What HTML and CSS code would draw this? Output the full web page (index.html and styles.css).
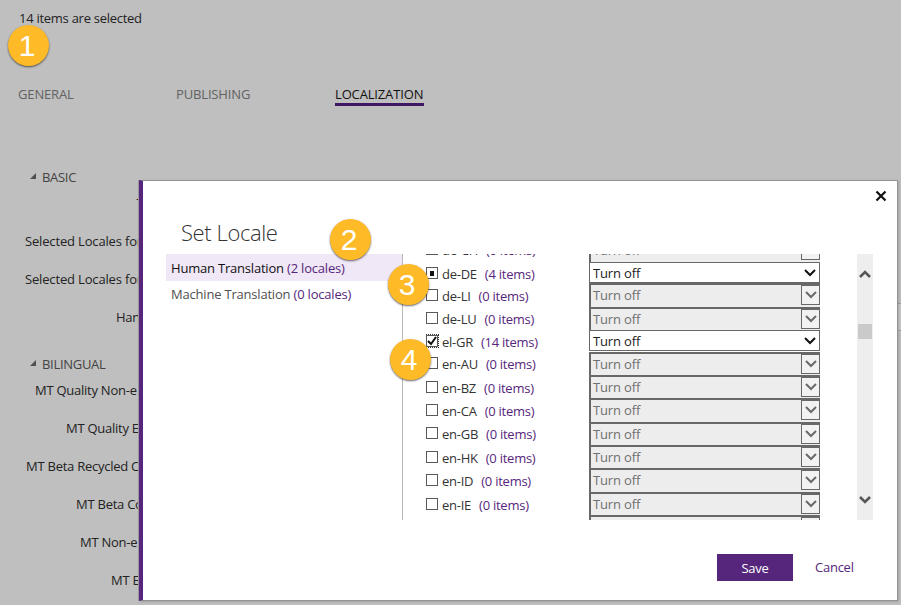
FILE: index.html
```html
<!DOCTYPE html>
<html lang="en">
<head>
<meta charset="utf-8">
<title>Set Locale</title>
<link rel="stylesheet" href="styles.css">
</head>
<body>
<main class="page">
  <p class="status">14 items are selected</p>
  <nav class="tabs">
    <span class="tab general">GENERAL</span>
    <span class="tab publishing">PUBLISHING</span>
    <span class="tab active">LOCALIZATION</span>
  </nav>
  <section class="group basic">
    <h2><svg width="6" height="6"><path d="M6 0V6H0Z"/></svg><span>BASIC</span></h2>
    <div class="field dash"><span>-</span></div>
    <div class="field sel">Selected Locales for</div>
    <div class="field sel">Selected Locales for</div>
    <div class="field han">Han</div>
  </section>
  <section class="group bilingual">
    <h2><svg width="6" height="6"><path d="M6 0V6H0Z"/></svg><span>BILINGUAL</span></h2>
    <div class="field f1">MT Quality Non-e</div>
    <div class="field f2">MT Quality E</div>
    <div class="field f3">MT Beta Recycled C</div>
    <div class="field f4">MT Beta Co</div>
    <div class="field f5">MT Non-e</div>
    <div class="field f6">MT E</div>
  </section>
  <div class="strip"></div>
</main>

<div class="dialog">
  <header class="dialog-head">
    <h1>Set Locale</h1>
    <svg class="close" width="12" height="12" viewBox="0 0 12 12"><path d="M1.5 1.5L10.5 10.5M10.5 1.5L1.5 10.5"/></svg>
  </header>
  <div class="dialog-body">
    <div class="kinds">
      <div class="kind chosen"><span>Human Translation</span> <b>(2 locales)</b></div>
      <div class="kind"><span>Machine Translation</span> <b>(0 locales)</b></div>
    </div>
    <div class="list" id="list"></div>
    <div class="scroll">
      <svg class="up" width="12" height="8" viewBox="0 0 12 8"><path d="M1 7L6 2L11 7"/></svg>
      <div class="thumb"></div>
      <svg class="down" width="12" height="8" viewBox="0 0 12 8"><path d="M1 1L6 6L11 1"/></svg>
    </div>
  </div>
  <footer class="dialog-foot">
    <div class="save">Save</div>
    <div class="cancel">Cancel</div>
  </footer>
</div>

<div class="badge one">1</div>
<div class="badge two">2</div>
<div class="badge three">3</div>
<div class="badge four">4</div>
<script src="app.js"></script>
</body>
</html>
```
FILE: styles.css
```css
* { box-sizing: border-box; }
body {
  margin: 0;
  width: 901px;
  height: 605px;
  overflow: hidden;
  position: relative;
  background: #bfbfbf;
  font-family: "Open Sans", "Noto Sans", sans-serif;
  font-size: 13px;
  letter-spacing: -0.25px;
  line-height: 18px;
  color: #222;
}
.page { height: 605px; overflow: hidden; position: relative; }
.status { margin: 0; padding: 9px 0 0 19px; height: 85px; letter-spacing: -0.27px; }
.tabs { display: flex; height: 81px; padding-left: 18px; color: #626262; align-items: flex-start; }
.tab { letter-spacing: -0.15px; white-space: nowrap; }
.general { width: 158px; }
.publishing { width: 159px; }
.active { color: #111; border-bottom: 3px solid #3d1763; height: 21px; width: 89px; }
.group h2 { margin: 0; padding-left: 30px; display: flex; align-items: center; gap: 6px; font-size: 13px; font-weight: 400; color: #444; height: 20px; letter-spacing: -0.3px; }
.group h2 svg { margin-top: -2px; fill: #505050; }
.basic { height: 188px; padding-top: 1px; }
.field { height: 38px; line-height: 38px; white-space: nowrap; }
.dash { height: 35px; line-height: 23px; padding-left: 136px; }
.sel { padding-left: 25px; letter-spacing: -0.16px; }
.han { padding-left: 116px; }
.bilingual h2 { height: 20px; }
.bilingual .f1 { margin-top: -3px; padding-left: 35px; }
.f2 { padding-left: 66px; }
.f3 { padding-left: 26px; }
.f4 { padding-left: 76px; }
.f5 { padding-left: 80px; }
.f6 { padding-left: 111px; }
.strip { position: absolute; right: 0; top: 303px; width: 4px; height: 28px; border-top: 1px solid #a0a0a0; border-bottom: 1px solid #a0a0a0; background: #c6c6c6; }

.dialog {
  position: absolute;
  left: 139px;
  top: 180px;
  width: 759px;
  height: 421px;
  background: #fff;
  border: 1px solid #929292;
  border-left: 4px solid #56267c;
  box-shadow: -1px 0 0 #999, 1px 1px 2px rgba(0,0,0,.15);
}
.dialog-head { height: 73px; display: flex; justify-content: space-between; padding: 9px 10px 0 38px; }
h1 { margin: 27px 0 0; font-size: 22px; line-height: 30px; font-weight: 300; color: #333; letter-spacing: -0.4px; }
.close { stroke: #111; stroke-width: 2.2; fill: none; }
.dialog-body { display: flex; height: 266px; padding-left: 23px; }
.kinds { width: 237px; border-right: 1px solid #b9b9b9; }
.kind { height: 26px; line-height: 27px; padding-left: 5px; color: #505050; white-space: nowrap; letter-spacing: -0.2px; }
.kind.chosen { background: #f0e7f7; color: #111; height: 27px; line-height: 29px; }
b { font-weight: 400; color: #56267c; }
.list { width: 417px; margin-left: 23px; overflow: hidden; }
.row { display: flex; align-items: flex-start; }
.row:first-child { margin-top: -16px; }
.check { width: 12px; height: 12px; border: 1px solid #585858; margin: 5px 4px 0 0; background: #fff; flex: none; }
.mixed { display: flex; align-items: center; justify-content: center; }
.mixed::before { content: ""; width: 4px; height: 5px; background: #111; }
.ticked { outline: 1px dotted #333; }
.ticked svg { display: block; fill: none; stroke: #111; stroke-width: 2; }
.name { width: 147px; line-height: 25px; display: flex; gap: 8px; color: #333; white-space: nowrap; }
.low .check { margin-top: 6px; }
.low .name { line-height: 27px; }
.select { width: 231px; height: 100%; display: flex; justify-content: space-between; background: #ededed; border: solid #686868; border-width: 2px 0 0 2px; padding-left: 2px; color: #707070; line-height: 21px; letter-spacing: -0.15px; }
.arrow { width: 19px; height: 20px; border: 1px solid #686868; background: #f2f2f2; display: flex; align-items: center; justify-content: center; }
.arrow svg { fill: none; stroke: #6a6a6a; stroke-width: 2; }
.on .select { height: 21px; border: 1px solid #686868; background: #fff; color: #222; padding-left: 3px; }
.on .arrow { border-color: transparent; background: none; height: 19px; }
.on .arrow svg { stroke: #111; }
.scroll { width: 16px; margin-left: 14px; background: #eee; display: flex; flex-direction: column; align-items: center; padding-top: 16px; }
.scroll svg { fill: none; stroke: #575757; stroke-width: 2.6; }
.thumb { width: 14px; height: 15px; background: #cacaca; margin: 46px 0 157px; }
.dialog-foot { display: flex; height: 80px; padding: 34px 0 0 574px; }
.save { width: 76px; height: 27px; background: #56267c; color: #fff; text-align: center; line-height: 29px; }
.cancel { margin-left: 22px; line-height: 27px; color: #56267c; }

.badge {
  position: absolute;
  width: 41px;
  height: 41px;
  padding-right: 2px;
  border-radius: 50%;
  background: #ffba28;
  color: #fff;
  text-align: center;
  font: 30px/41px "Liberation Sans", Arial, sans-serif;
  letter-spacing: 0;
  box-shadow: 0 1px 2px rgba(0,0,0,.6);
}
.one { left: 7.5px; top: 25px; }
.two { left: 329.5px; top: 219px; }
.three { left: 387.5px; top: 264px; }
.four { left: 389.5px; top: 339px; }
```
FILE: app.js
```js
const rows = [
  ["de-CH", 0, 24], ["de-DE", 4, 21], ["de-LI", 0, 24, 1], ["de-LU", 0, 23],
  ["el-GR", 14, 22], ["en-AU", 0, 23], ["en-BZ", 0, 23, 1], ["en-CA", 0, 24, 1],
  ["en-GB", 0, 23], ["en-HK", 0, 23, 1], ["en-ID", 0, 24, 1], ["en-IE", 0, 23, 1], ["en-IN", 0, 23]
];
const tick = '<svg width="10" height="10" viewBox="0 0 10 10"><path d="M1 5L4 8L9 1"/></svg>';
const chevron = '<svg width="12" height="8" viewBox="0 0 12 8"><path d="M1 1L6 6L11 1"/></svg>';
document.getElementById("list").innerHTML = rows.map(([name, count, height, low]) => {
  const state = count === 14 ? " ticked" : count ? " mixed" : "";
  return `<div class="row${count ? " on" : ""}${low ? " low" : ""}" style="height:${height}px">
    <div class="check${state}">${count === 14 ? tick : ""}</div>
    <div class="name"><span>${name}</span><b>(${count} items)</b></div>
    <div class="select"><span>Turn off</span><div class="arrow">${chevron}</div></div>
  </div>`;
}).join("");
```
